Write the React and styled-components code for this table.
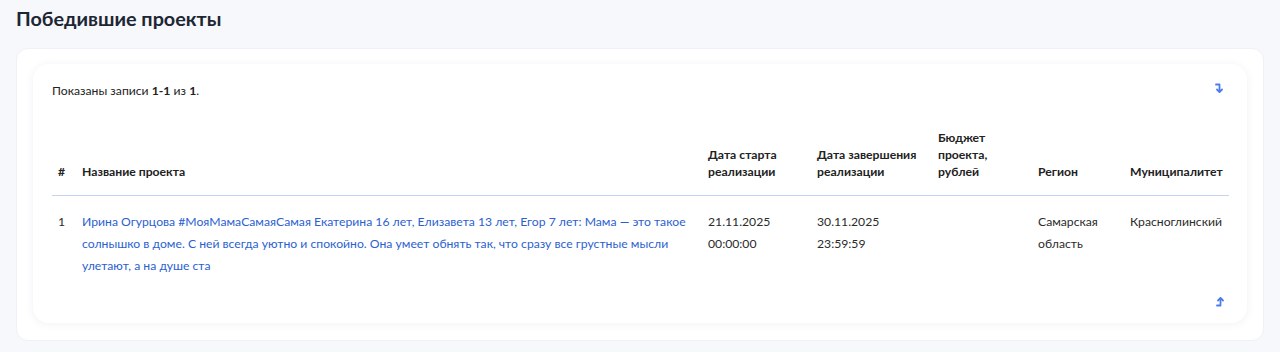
import React from 'react'
import styled, { createGlobalStyle } from 'styled-components'

const GlobalStyle = createGlobalStyle`
  html, body {
    margin: 0;
    padding: 0;
    background: #f6f8fc;
    font-family: Lato, "Noto Sans", sans-serif;
    color: #222;
  }
`

const Page = styled.div`
  padding: 6px 16px 12px;
`

const Title = styled.h2`
  margin: 0 0 18px;
  font-size: 19.8px;
  line-height: 24px;
  font-weight: 700;
  color: #1d2633;
`

const Panel = styled.div`
  background: #fff;
  border: 1px solid #eef1f7;
  border-radius: 12px;
  padding: 15px 16px 17px;
`

const Card = styled.div`
  background: #fff;
  border-radius: 16px;
  box-shadow: 0 1px 8px rgba(30, 50, 100, 0.07);
  padding: 16px 18px 14px 19px;
`

const TopRow = styled.div`
  display: flex;
  justify-content: space-between;
  align-items: center;
  font-size: 12.2px;
  line-height: 17px;
  padding-top: 2px;
  margin-bottom: 30px;
`

const Summary = styled.div`
  color: #222;
  b { font-weight: 700; }
`

const Scroll = styled.button`
  display: flex;
  align-items: center;
  justify-content: center;
  width: 14px;
  height: 14px;
  padding: 0;
  margin-top: ${p => (p.$bottom ? '0' : '-6px')};
  margin-right: ${p => (p.$bottom ? '2px' : '3px')};
  border: none;
  background: none;
  color: #4a7cf0;
`

const BottomRow = styled.div`
  display: flex;
  justify-content: flex-end;
  margin-top: 6px;
`

const Table = styled.table`
  width: 1177px;
  border-collapse: collapse;
  table-layout: fixed;
  font-size: 12.2px;
`

const Th = styled.th`
  box-sizing: border-box;
  width: ${p => p.$w}px;
  text-align: left;
  vertical-align: bottom;
  font-weight: 700;
  line-height: 17px;
  padding: 0 6px 15px;
  color: #222;
  border-bottom: 1px solid #c3d4f6;
`

const Td = styled.td`
  vertical-align: top;
  line-height: 22px;
  padding: 15px 6px 12px;
  color: #2b2b2b;
`

const ProjectLink = styled.a`
  color: #2c5fd0;
  text-decoration: none;
`

const ArrowDown = () => (
  <svg width="10" height="12" viewBox="0 0 10 12" fill="none" stroke="currentColor" strokeWidth="1.8" strokeLinecap="round" strokeLinejoin="round">
    <path d="M2 2.5h3.5v7" />
    <path d="M3 7.5l2.5 2.5 2.5-2.5" />
  </svg>
)

const ArrowUp = () => (
  <svg width="10" height="12" viewBox="0 0 10 12" fill="none" stroke="currentColor" strokeWidth="1.8" strokeLinecap="round" strokeLinejoin="round">
    <path d="M2 9.5h3.5v-7" />
    <path d="M3 4.5l2.5-2.5 2.5 2.5" />
  </svg>
)

const columns = [
  { w: 24, title: '#' },
  { w: 626, title: 'Название проекта' },
  { w: 109, title: ['Дата старта', 'реализации'] },
  { w: 121, title: ['Дата завершения', 'реализации'] },
  { w: 100, title: ['Бюджет', 'проекта,', 'рублей'] },
  { w: 92, title: 'Регион' },
  { w: 105, title: 'Муниципалитет' }
]

const rows = [
  {
    n: 1,
    name: 'Ирина Огурцова #МояМамаСамаяСамая Екатерина 16 лет, Елизавета 13 лет, Егор 7 лет: Мама — это такое солнышко в доме. С ней всегда уютно и спокойно. Она умеет обнять так, что сразу все грустные мысли улетают, а на душе ста',
    start: ['21.11.2025', '00:00:00'],
    end: ['30.11.2025', '23:59:59'],
    budget: '',
    region: ['Самарская', 'область'],
    municipality: 'Красноглинский'
  }
]

const lines = (v) => Array.isArray(v)
  ? v.map((s, i) => <React.Fragment key={i}>{i > 0 && <br />}{s}</React.Fragment>)
  : v

const App = () => (
  <>
    <GlobalStyle />
    <Page>
      <Title>Победившие проекты</Title>
      <Panel>
        <Card>
          <TopRow>
            <Summary>Показаны записи <b>1-1</b> из <b>1</b>.</Summary>
            <Scroll><ArrowDown /></Scroll>
          </TopRow>
          <Table>
            <thead>
              <tr>
                {columns.map((c, i) => <Th key={i} $w={c.w}>{lines(c.title)}</Th>)}
              </tr>
            </thead>
            <tbody>
              {rows.map(r => (
                <tr key={r.n}>
                  <Td>{r.n}</Td>
                  <Td><ProjectLink href="#">{r.name}</ProjectLink></Td>
                  <Td>{lines(r.start)}</Td>
                  <Td>{lines(r.end)}</Td>
                  <Td>{r.budget}</Td>
                  <Td>{lines(r.region)}</Td>
                  <Td>{r.municipality}</Td>
                </tr>
              ))}
            </tbody>
          </Table>
          <BottomRow>
            <Scroll $bottom><ArrowUp /></Scroll>
          </BottomRow>
        </Card>
      </Panel>
    </Page>
  </>
)

export default App
